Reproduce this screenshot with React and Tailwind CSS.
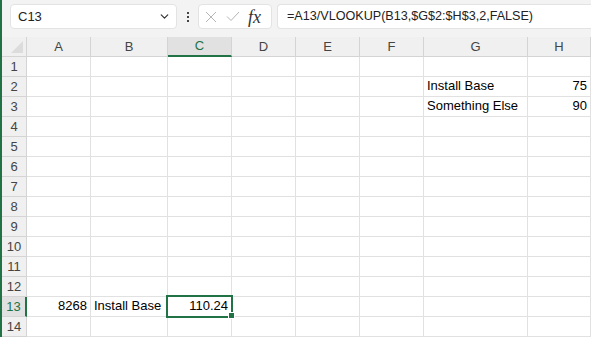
import { ChevronDown } from 'lucide-react';

const cols = ['A', 'B', 'C', 'D', 'E', 'F', 'G', 'H'];
const rows = Array.from({ length: 14 }, (_, i) => i + 1);

// cell values keyed by "col+row"
const cells = {
  G2: { v: 'Install Base' },
  H2: { v: '75', right: true },
  G3: { v: 'Something Else' },
  H3: { v: '90', right: true },
  A13: { v: '8268', right: true },
  B13: { v: 'Install Base' },
  C13: { v: '110.24', right: true },
};

const FormulaBar = () => (
  <div className="h-[37px] bg-[#f3f3f3] flex items-start pt-[4px] pl-[8px] gap-0">
    <div className="w-[167px] h-[25px] bg-white border border-[#e3e3e3] rounded-[4px] flex items-center pl-[7px] pr-[5px] justify-between">
      <span className="text-[13px] text-[#222]">C13</span>
      <ChevronDown size={13} strokeWidth={2.2} className="text-[#333]" />
    </div>
    <div className="w-[21px] h-[25px] flex flex-col items-center justify-center gap-[2px]">
      <span className="w-[2px] h-[2px] bg-[#444]" />
      <span className="w-[2px] h-[2px] bg-[#444]" />
      <span className="w-[2px] h-[2px] bg-[#444]" />
    </div>
    <div className="w-[74px] h-[25px] bg-white border border-[#e3e3e3] rounded-[4px] flex items-center pl-[6px] gap-[9px]">
      <svg width="12" height="12" viewBox="0 0 12 12" fill="none" stroke="#b5b5b5" strokeWidth="1">
        <path d="M1 1L11 11M11 1L1 11" />
      </svg>
      <svg width="14" height="11" viewBox="0 0 14 11" fill="none" stroke="#b5b5b5" strokeWidth="1">
        <path d="M1 5.5L5 9.5L13 1" />
      </svg>
      <span className="text-[18px] italic text-[#333] leading-none -ml-[1px]" style={{ fontFamily: '"Liberation Serif", serif' }}>fx</span>
    </div>
    <div className="ml-[5px] flex-1 h-[25px] bg-white border border-[#e3e3e3] border-r-0 rounded-l-[4px] flex items-center pl-[9px]">
      <span className="text-[12.6px] text-[#222]">=A13/VLOOKUP(B13,$G$2:$H$3,2,FALSE)</span>
    </div>
  </div>
);

const Sheet = () => (
  <div className="grid grid-cols-[25px_64px_77px_64px_64px_64px_64px_104px_63px] grid-rows-[20px] auto-rows-[20px]">
    <div className="bg-[#f0f0f0] border-r border-b border-[#d4d4d4] relative">
      <div className="absolute right-[3px] bottom-[3px] w-0 h-0 border-l-[12px] border-l-transparent border-b-[12px] border-b-[#dcdcdc]" />
    </div>
    {cols.map((c) => (
      <div
        key={c}
        className={
          c === 'C'
            ? 'bg-[#e1e1e1] border-r border-[#d4d4d4] border-b-2 border-b-[#217346] flex items-center justify-center text-[13px] text-[#217346]'
            : 'bg-[#f0f0f0] border-r border-b border-[#d4d4d4] flex items-center justify-center text-[13px] text-[#444]'
        }
      >
        {c}
      </div>
    ))}
    {rows.map((r) => (
      <RowCells key={r} r={r} />
    ))}
  </div>
);

const RowCells = ({ r }) => (
  <>
    <div
      className={
        r === 13
          ? 'bg-[#e1e1e1] border-r-2 border-r-[#217346] border-b border-[#d4d4d4] flex items-center justify-center text-[13px] text-[#217346]'
          : 'bg-[#f0f0f0] border-r border-b border-[#d4d4d4] flex items-center justify-center text-[13px] text-[#444]'
      }
    >
      {r}
    </div>
    {cols.map((c) => {
      const cell = cells[c + r];
      return (
        <div
          key={c}
          className={
            'relative bg-white border-r border-b border-[#e1e1e1] flex items-end pb-[1px] px-[3px] text-[13px] text-black whitespace-nowrap ' +
            (cell && cell.right ? 'justify-end' : 'justify-start')
          }
        >
          {cell && cell.v}
          {c + r === 'C13' && (
            <>
              <div className="absolute z-10 left-[-2px] top-[-2px] w-[67px] h-[23px] border-2 border-[#217346]" />
              <div className="absolute z-10 left-[60px] top-[15px] w-[5px] h-[5px] bg-[#217346] border border-white box-content" />
            </>
          )}
        </div>
      );
    })}
  </>
);

export default function App() {
  return (
    <div className="w-[591px] h-[337px] overflow-hidden bg-white flex" style={{ fontFamily: '"Liberation Sans", Arial, sans-serif' }}>
      <div className="w-[2px] bg-[#217346] shrink-0" />
      <div className="flex-1 flex flex-col">
        <FormulaBar />
        <Sheet />
      </div>
    </div>
  );
}
